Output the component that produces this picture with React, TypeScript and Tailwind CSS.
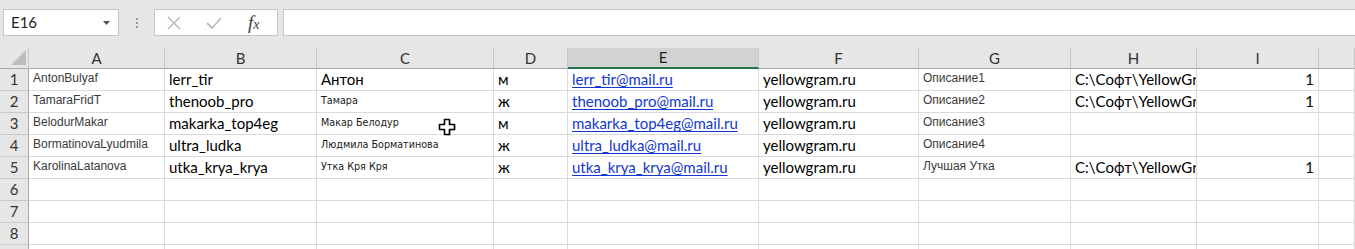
import React from "react";

type Kind = "cal" | "arial" | "small" | "link" | "num" | "clip";

interface Cell {
  text: string;
  kind: Kind;
}

const cols = ["A", "B", "C", "D", "E", "F", "G", "H", "I", ""];
// the path is cut by the next column in the sheet
const path = "C:\\Софт\\YellowGra";

const rows: (Cell | null)[][] = [
  [
    { text: "AntonBulyaf", kind: "arial" },
    { text: "lerr_tir", kind: "cal" },
    { text: "Антон", kind: "cal" },
    { text: "м", kind: "cal" },
    { text: "lerr_tir@mail.ru", kind: "link" },
    { text: "yellowgram.ru", kind: "cal" },
    { text: "Описание1", kind: "arial" },
    { text: path, kind: "clip" },
    { text: "1", kind: "num" },
  ],
  [
    { text: "TamaraFridT", kind: "arial" },
    { text: "thenoob_pro", kind: "cal" },
    { text: "Тамара", kind: "small" },
    { text: "ж", kind: "cal" },
    { text: "thenoob_pro@mail.ru", kind: "link" },
    { text: "yellowgram.ru", kind: "cal" },
    { text: "Описание2", kind: "arial" },
    { text: path, kind: "clip" },
    { text: "1", kind: "num" },
  ],
  [
    { text: "BelodurMakar", kind: "arial" },
    { text: "makarka_top4eg", kind: "cal" },
    { text: "Макар Белодур", kind: "small" },
    { text: "м", kind: "cal" },
    { text: "makarka_top4eg@mail.ru", kind: "link" },
    { text: "yellowgram.ru", kind: "cal" },
    { text: "Описание3", kind: "arial" },
    null,
    null,
  ],
  [
    { text: "BormatinovaLyudmila", kind: "arial" },
    { text: "ultra_ludka", kind: "cal" },
    { text: "Людмила Борматинова", kind: "small" },
    { text: "ж", kind: "cal" },
    { text: "ultra_ludka@mail.ru", kind: "link" },
    { text: "yellowgram.ru", kind: "cal" },
    { text: "Описание4", kind: "arial" },
    null,
    null,
  ],
  [
    { text: "KarolinaLatanova", kind: "arial" },
    { text: "utka_krya_krya", kind: "cal" },
    { text: "Утка Кря Кря", kind: "small" },
    { text: "ж", kind: "cal" },
    { text: "utka_krya_krya@mail.ru", kind: "link" },
    { text: "yellowgram.ru", kind: "cal" },
    { text: "Лучшая Утка", kind: "arial" },
    { text: path, kind: "clip" },
    { text: "1", kind: "num" },
  ],
  [], [], [], [],
];

const kindClass: Record<Kind, string> = {
  cal: "font-['Lato',sans-serif] text-[15px] text-black",
  clip: "font-['Lato',sans-serif] text-[15px] text-black pr-0",
  arial: "font-['Liberation_Sans',Arial,sans-serif] text-[12px] text-[#3a3a3a] pb-[3px]",
  small: "font-['DejaVu_Sans',sans-serif] text-[9.6px] text-[#1a1a1a]",
  link: "font-['Lato',sans-serif] text-[15px] text-[#1238d0] underline underline-offset-[2px] decoration-1",
  num: "font-['Lato',sans-serif] text-[15px] text-black justify-end",
};

function Toolbar() {
  return (
    <div className="h-[48px] flex items-start pt-[9px] bg-[#e6e6e6]">
      {/* name box */}
      <div className="ml-[3px] w-[116px] h-[27px] bg-white border border-[#c6c6c6] flex items-center justify-between pl-[7px] pr-[8px]">
        <span className="font-['Lato',sans-serif] text-[15px] text-[#222]">E16</span>
        <svg width="7" height="4" viewBox="0 0 7 4">
          <polygon points="0,0 7,0 3.5,4" fill="#555" />
        </svg>
      </div>
      {/* grip */}
      <div className="w-[35px] h-[27px] flex flex-col items-center justify-center gap-[2px]">
        <span className="w-[2px] h-[2px] bg-[#9a9a9a]" />
        <span className="w-[2px] h-[2px] bg-[#9a9a9a]" />
        <span className="w-[2px] h-[2px] bg-[#9a9a9a]" />
      </div>
      {/* cancel / enter / fx */}
      <div className="w-[124px] h-[27px] bg-white border border-[#c6c6c6] flex items-center">
        <svg width="14" height="14" viewBox="0 0 14 14" className="ml-[12px]">
          <path d="M1 1 L13 13 M13 1 L1 13" stroke="#b5b5b5" strokeWidth="1.4" />
        </svg>
        <svg width="16" height="14" viewBox="0 0 16 14" className="ml-[25px]">
          <path d="M1 7 L6 12 L15 2" stroke="#bdbdbd" strokeWidth="1.8" fill="none" />
        </svg>
        <span className="ml-[26px] font-['Liberation_Serif',serif] italic text-[19px] text-[#3f3f3f] leading-none">
          f<span className="text-[14px]">x</span>
        </span>
      </div>
      {/* formula input */}
      <div className="ml-[5px] flex-1 h-[27px] bg-white border border-[#c6c6c6] border-r-0" />
    </div>
  );
}

function Cursor() {
  return (
    <svg
      width="19"
      height="19"
      viewBox="0 0 19 19"
      className="absolute left-[438px] top-[118px]"
    >
      <path
        d="M7.5 2.5 h4 v5 h5 v4 h-5 v5 h-4 v-5 h-5 v-4 h5 z"
        fill="#555"
        transform="translate(1 1)"
        opacity="0.35"
      />
      <path
        d="M6.5 1.5 h5 v5 h5 v5 h-5 v5 h-5 v-5 h-5 v-5 h5 z"
        fill="white"
        stroke="black"
        strokeWidth="1.6"
        strokeLinejoin="round"
      />
    </svg>
  );
}

export default function App() {
  return (
    <div className="relative w-[1355px] h-[249px] overflow-hidden bg-white select-none">
      <Toolbar />

      <div className="grid grid-cols-[29px_136px_152px_177px_74px_191px_160px_152px_126px_122px_1fr]">
        {/* corner */}
        <div className="h-[21px] bg-[#e6e6e6] border-r border-b border-r-[#c6c6c6] border-b-[#a8a8a8] flex items-end justify-end pr-[2px] pb-[3px]">
          <svg width="15" height="15" viewBox="0 0 15 15">
            <polygon points="15,0 15,15 0,15" fill="#bcbcbc" />
          </svg>
        </div>
        {cols.map((c, i) => (
          <div
            key={c + i}
            className={
              c === "E"
                ? "h-[21px] bg-[#d2d2d2] border-r border-r-[#c6c6c6] border-b-2 border-b-[#217346] flex items-center justify-center font-['Lato',sans-serif] text-[15px] text-[#222]"
                : "h-[21px] bg-[#e6e6e6] border-r border-r-[#c6c6c6] border-b border-b-[#a8a8a8] flex items-center justify-center font-['Lato',sans-serif] text-[15px] text-[#333]"
            }
          >
            {c}
          </div>
        ))}

        {rows.map((r, ri) => (
          <React.Fragment key={ri}>
            <div className="h-[22px] bg-[#e6e6e6] border-r border-b border-r-[#a8a8a8] border-b-[#c9c9c9] flex items-center justify-center font-['Lato',sans-serif] text-[15px] text-[#333]">
              {ri + 1}
            </div>
            {cols.map((_, ci) => {
              const cell = r[ci];
              return (
                <div
                  key={ci}
                  className={
                    "h-[22px] border-r border-b border-[#dadada] flex items-center px-[4px] whitespace-nowrap overflow-hidden " +
                    (cell ? kindClass[cell.kind] : "")
                  }
                >
                  {cell ? cell.text : null}
                </div>
              );
            })}
          </React.Fragment>
        ))}
      </div>

      <Cursor />
    </div>
  );
}
